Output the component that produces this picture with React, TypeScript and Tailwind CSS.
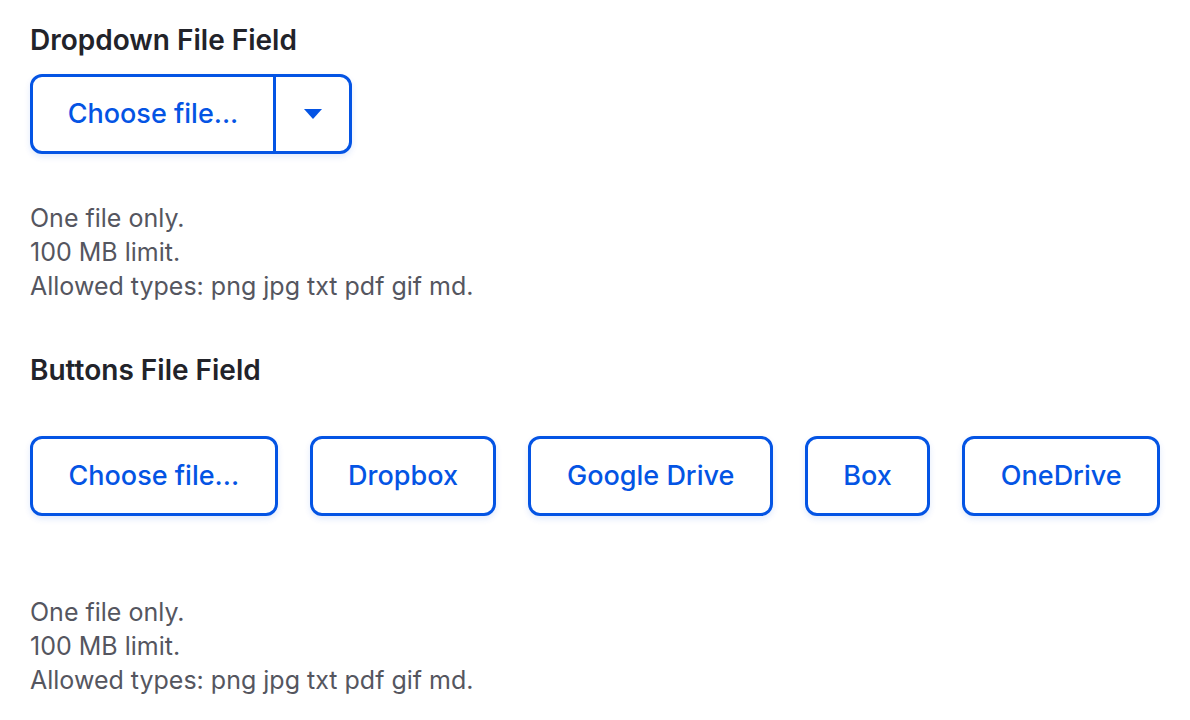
import React from "react";

const Help = () => (
    <div className="text-[25px] leading-[34px] text-[#55565f]">
        <div>One file only.</div>
        <div>100 MB limit.</div>
        <div>Allowed types: png jpg txt pdf gif md.</div>
    </div>
);

const btn =
    "h-[80px] px-[35.5px] rounded-[12px] border-[3px] border-[#0454e4] bg-white text-[27px] font-medium text-[#0454e4] shadow-[0_3px_6px_rgba(4,84,228,0.12)]";

export default function App() {
    const sources = ["Choose file...", "Dropbox", "Google Drive", "Box", "OneDrive"];

    return (
        <div
            className="min-h-screen bg-white pl-[30px] pt-[23px]"
            style={{ fontFamily: "Inter, 'Noto Sans', sans-serif" }}
        >
            <h2 className="text-[28px] leading-[34px] font-semibold text-[#22232a]">
                Dropdown File Field
            </h2>
            <div className="mt-[17px] flex h-[80px] w-[322px] rounded-[12px] border-[3px] border-[#0454e4] bg-white shadow-[0_3px_6px_rgba(4,84,228,0.12)]">
                <button className="flex-1 text-[27px] font-medium text-[#0454e4]">
                    Choose file...
                </button>
                <button className="flex w-[76px] items-center justify-center border-l-[3px] border-[#0454e4]">
                    <svg width="18" height="10" viewBox="0 0 18 10">
                        <path d="M0 0h18L9 10z" fill="#0454e4" />
                    </svg>
                </button>
            </div>
            <div className="mt-[47px]">
                <Help />
            </div>

            <h2 className="mt-[50px] text-[28px] leading-[34px] font-semibold text-[#22232a]">
                Buttons File Field
            </h2>
            <div className="mt-[49px] flex gap-[32px]">
                {sources.map((s) => (
                    <button key={s} className={btn}>
                        {s}
                    </button>
                ))}
            </div>
            <div className="mt-[79px]">
                <Help />
            </div>
        </div>
    );
}
